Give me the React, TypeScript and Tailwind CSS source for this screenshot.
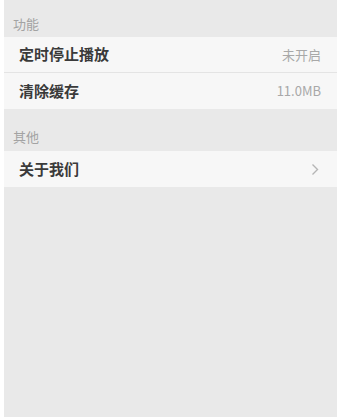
import React from 'react';

const font = { fontFamily: '"Noto Sans CJK SC", "Liberation Sans", sans-serif' };

const SectionHeader: React.FC<{ title: string; tall?: boolean }> = ({ title, tall }) => (
  <div className={`flex items-end pl-[9px] text-[13px] text-[#a3a3a3] ${tall ? 'h-[42px] pb-[5px]' : 'h-[37px] pb-[4px]'}`}>
    {title}
  </div>
);

const Row: React.FC<{ label: string; value?: string; arrow?: boolean; divider?: boolean }> = ({ label, value, arrow, divider }) => (
  <div className={`flex h-[36px] items-center justify-between bg-[#f7f7f7] pl-[15px] pr-[16px] ${divider ? 'border-b border-[#e4e4e4]' : ''}`}>
    <span className="text-[15px] font-bold text-[#3a3a3a]">{label}</span>
    {value && <span className="text-[13px] text-[#a8a8a8]">{value}</span>}
    {arrow && (
      <svg width="8" height="13" viewBox="0 0 8 13" fill="none" className="mr-[2px]">
        <path d="M1.5 1.5l5 5-5 5" stroke="#b5b5b5" strokeWidth="1.4" />
      </svg>
    )}
  </div>
);

export default function App() {
  return (
    <div className="h-[420px] w-[340px] bg-white pl-[4px] pr-[3px] pb-[3px]" style={font}>
      <div className="flex h-full flex-col bg-[#e9e9e9]">
        <SectionHeader title="功能" />
        <Row label="定时停止播放" value="未开启" divider />
        <Row label="清除缓存" value="11.0MB" />
        <SectionHeader title="其他" tall />
        <Row label="关于我们" arrow />
        <div className="flex-1" />
      </div>
    </div>
  );
}
